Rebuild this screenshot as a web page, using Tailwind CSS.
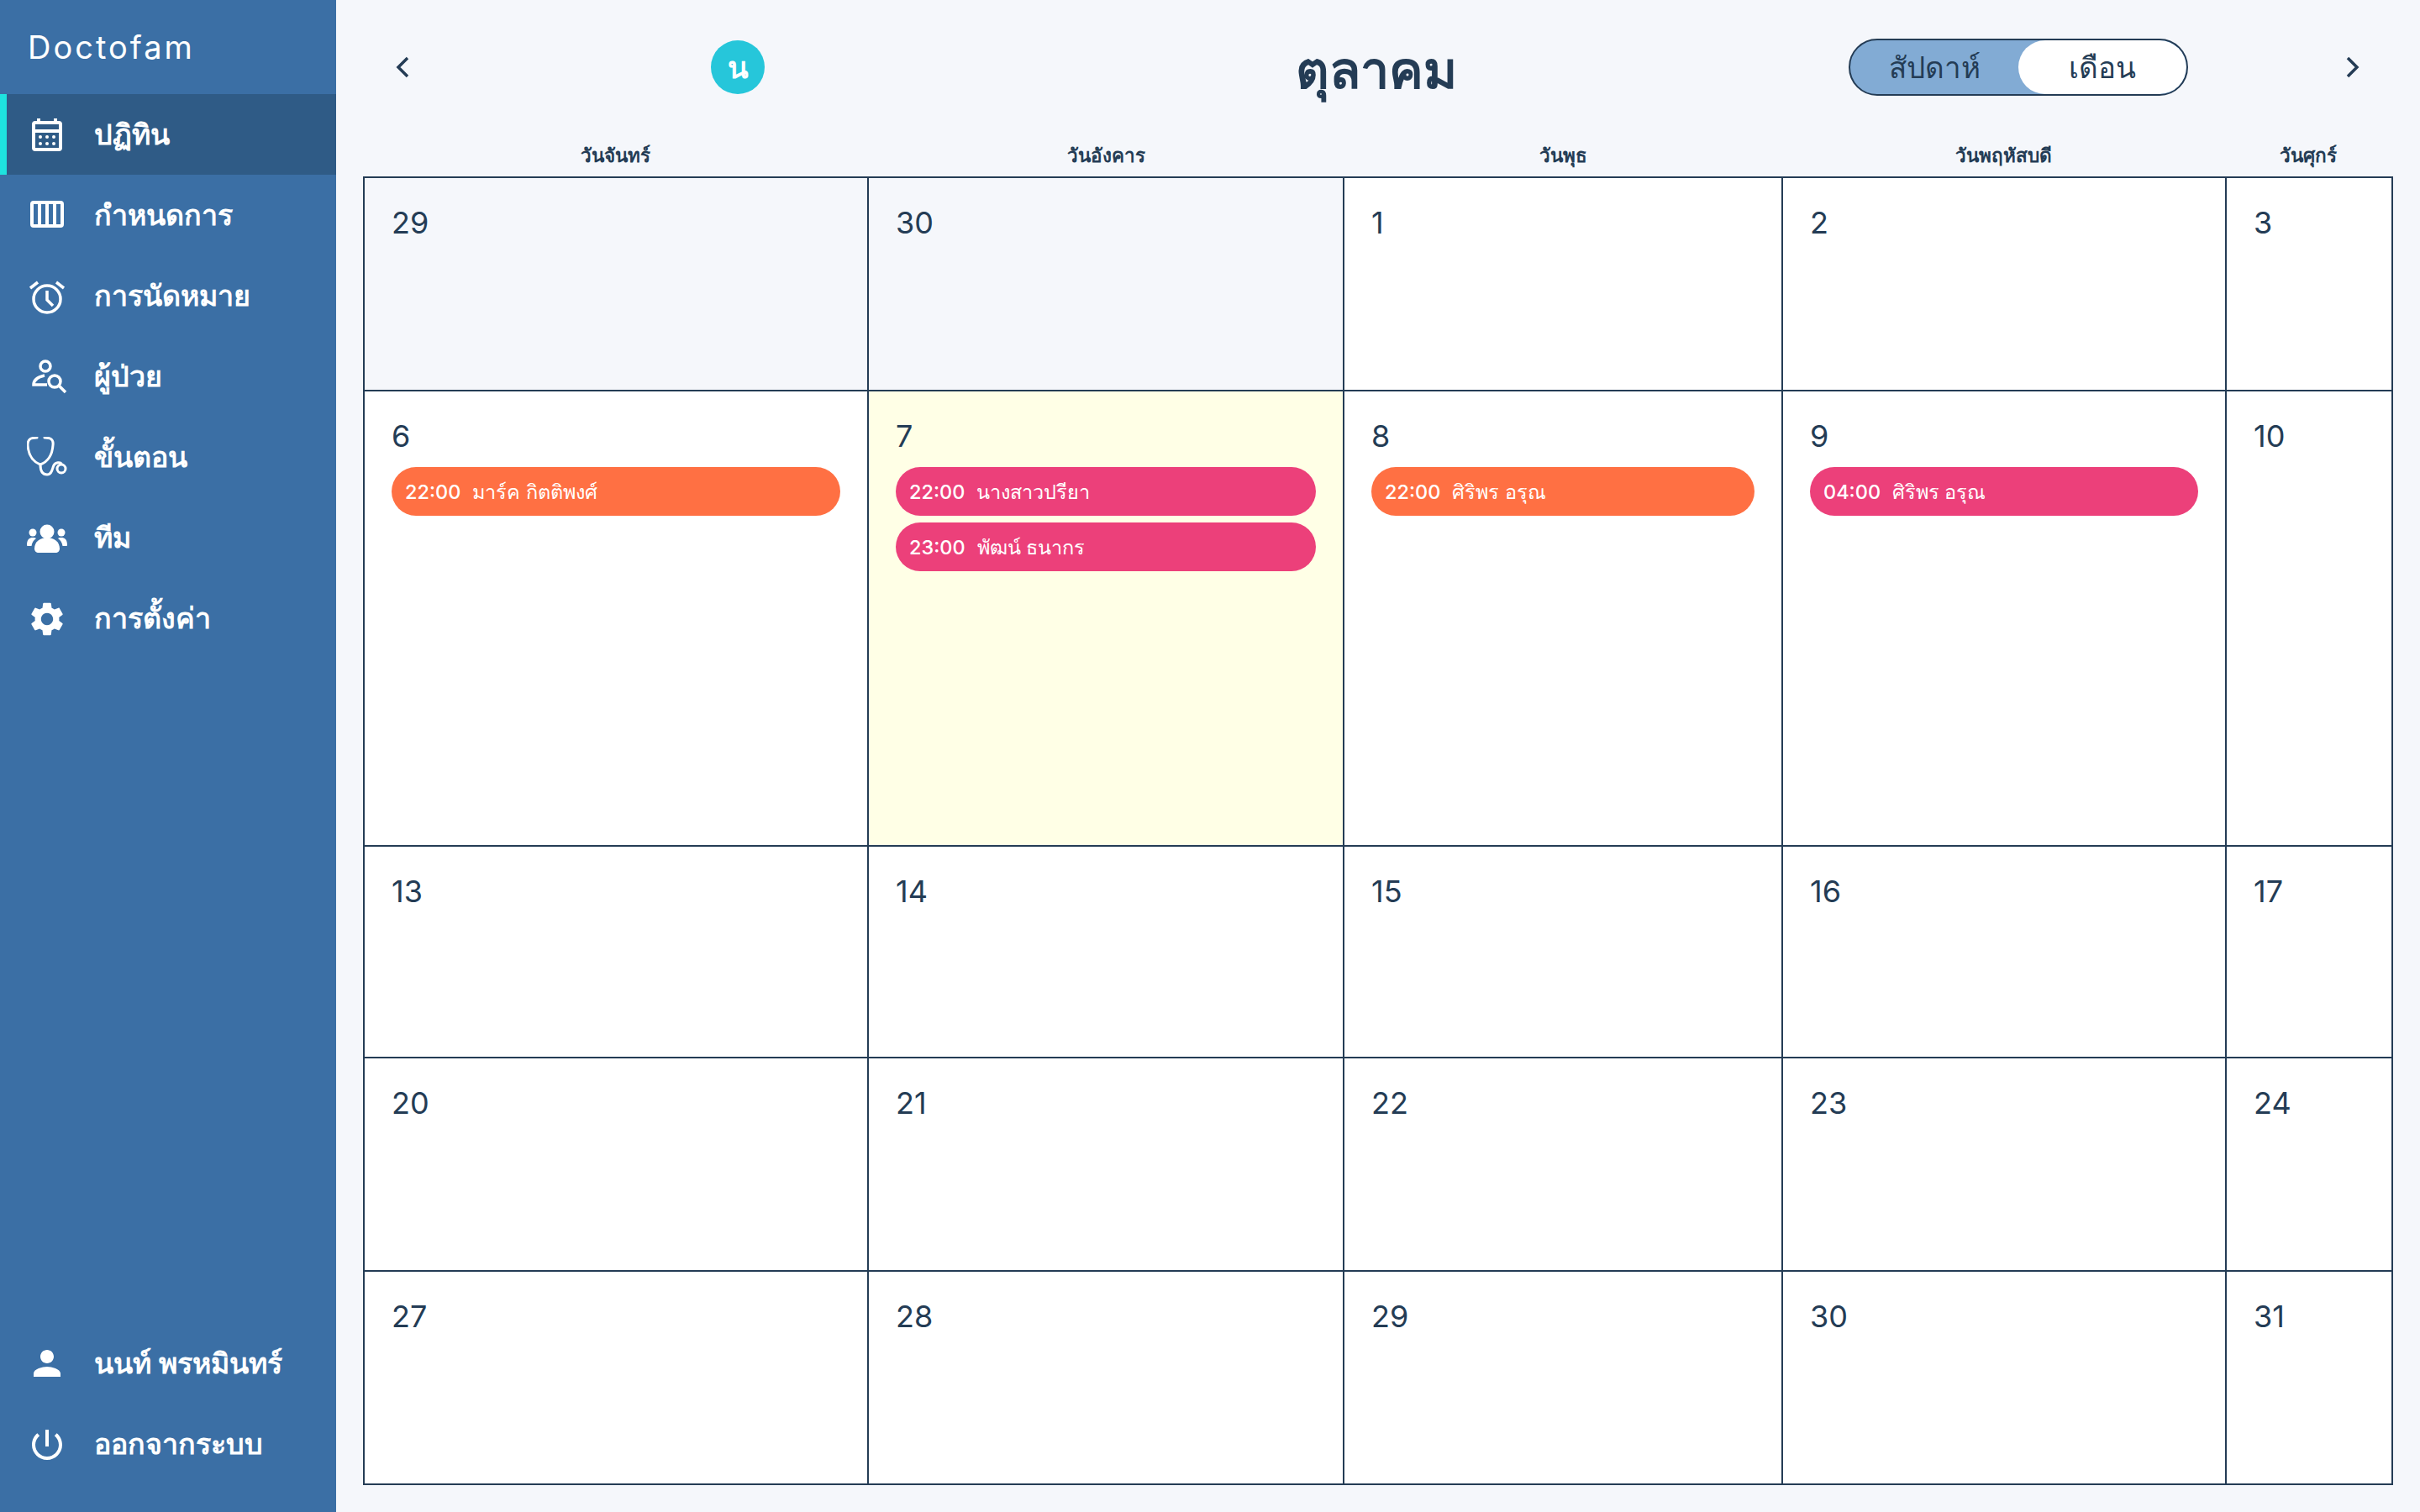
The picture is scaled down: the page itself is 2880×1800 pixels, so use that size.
<!doctype html>
<html lang="th">
<head>
<meta charset="utf-8">
<script src="https://cdn.jsdelivr.net/npm/@tailwindcss/browser@4"></script>
</head>
<body class="m-0">
<div class="flex h-[1800px] w-[2880px] overflow-hidden bg-[#f5f7fb] font-['Inter','Noto_Sans','DejaVu_Sans',sans-serif] text-[#243c55]">
  <aside class="flex w-[400px] shrink-0 flex-col bg-[#3b6fa5] pb-[33px] text-white">
    <div class="flex h-[112px] items-center pl-[33px] text-[38px] font-normal tracking-[3px]">Doctofam</div>
    <nav class="flex flex-1 flex-col">
      <a class="flex h-[96px] items-center gap-[32px] border-l-[8px] border-[#1ee3df] bg-[#2f5b86] pb-[2px] pl-[24px] text-[34px] font-semibold">
        <svg class="mt-[5px] h-[48px] w-[48px] shrink-0" viewBox="0 0 48 48" fill="none" stroke="#fff" stroke-width="4"><rect x="8" y="8" width="32" height="32" rx="2"/><path d="M8 18h32M14 3v7M34 3v7"/><g fill="#fff" stroke="none"><circle cx="16" cy="25" r="2"/><circle cx="24" cy="25" r="2"/><circle cx="32" cy="25" r="2"/><circle cx="16" cy="33" r="2"/><circle cx="24" cy="33" r="2"/><circle cx="32" cy="33" r="2"/></g></svg>
        <span>ปฏิทิน</span>
      </a>
      <a class="flex h-[96px] items-center gap-[32px] pb-[2px] pl-[32px] text-[34px] font-semibold">
        <svg class="h-[48px] w-[48px] shrink-0" viewBox="0 0 48 48" fill="none" stroke="#fff" stroke-width="4"><rect x="6" y="10" width="36" height="28" rx="2"/><path d="M15 10v28M24 10v28M33 10v28"/></svg>
        <span>กำหนดการ</span>
      </a>
      <a class="flex h-[96px] items-center gap-[32px] pb-[2px] pl-[32px] text-[34px] font-semibold">
        <svg class="mt-[5px] h-[48px] w-[48px] shrink-0" viewBox="0 0 48 48" fill="none" stroke="#fff" stroke-width="3.5"><circle cx="24" cy="26" r="16"/><path d="M24 16v11l7 7M4 13l9-7M44 13l-9-7"/></svg>
        <span>การนัดหมาย</span>
      </a>
      <a class="flex h-[96px] items-center gap-[32px] pb-[2px] pl-[32px] text-[34px] font-semibold">
        <svg class="mt-[6px] h-[48px] w-[48px] shrink-0" viewBox="0 0 48 48" fill="none" stroke="#fff" stroke-width="3.5"><circle cx="22" cy="10" r="6"/><path d="M21 21C12 23 8 27 8 32h16"/><circle cx="33" cy="28" r="7"/><path d="M38 33l8 8"/></svg>
        <span>ผู้ป่วย</span>
      </a>
      <a class="flex h-[96px] items-center gap-[32px] pb-[2px] pl-[32px] text-[34px] font-semibold">
        <svg class="mt-[1px] h-[48px] w-[48px] shrink-0" viewBox="0 0 48 48" fill="none" stroke="#fff" stroke-width="3" stroke-linecap="round"><path d="M12 1C4 1 1 3 1 10c1 14 7 20 15 23 8-3 14-9 15-23 1-7-3-9-10-9"/><path d="M16 33c0 8 3 12 8 12 6 0 6-7 8-11 2-4 8-4 9-2"/><circle cx="41" cy="38" r="5"/></svg>
        <span>ขั้นตอน</span>
      </a>
      <a class="flex h-[96px] items-center gap-[32px] pb-[2px] pl-[32px] text-[34px] font-semibold">
        <svg class="mt-[3px] h-[48px] w-[48px] shrink-0" viewBox="0 0 48 48" fill="#fff"><circle cx="24" cy="16" r="8.5"/><circle cx="7" cy="17" r="4.5"/><circle cx="41" cy="17" r="4.5"/><path d="M9 36c0-8 7-13 15-13s15 5 15 13c0 3-2 5-5 5H14c-3 0-5-2-5-5z"/><path d="M0 32c0-7 3-9 7-9 2 0 3 0 4 1-3 2-5 5-5.500 9H2c-1 0-2 0-2-1zM48 32c0-7-3-9-7-9-2 0-3 0-4 1 3 2 5 5 5.500 9H46c1 0 2 0 2-1z"/></svg>
        <span>ทีม</span>
      </a>
      <a class="flex h-[96px] items-center gap-[32px] pb-[2px] pl-[32px] text-[34px] font-semibold">
        <svg class="mt-[4px] h-[48px] w-[48px] shrink-0" viewBox="0 0 24 24" fill="#fff"><path d="M19.14 12.94c.04-.3.06-.61.06-.94 0-.32-.02-.64-.07-.94l2.03-1.58c.18-.14.23-.41.12-.61l-1.92-3.32c-.12-.22-.37-.29-.59-.22l-2.39.96c-.5-.38-1.03-.7-1.62-.94l-.36-2.54c-.04-.24-.24-.41-.48-.41h-3.84c-.24 0-.43.17-.47.41l-.36 2.54c-.59.24-1.13.57-1.62.94l-2.39-.96c-.22-.08-.47 0-.59.22L2.74 8.87c-.12.21-.08.47.12.61l2.03 1.58c-.05.3-.09.63-.09.94s.02.64.07.94l-2.03 1.58c-.18.14-.23.41-.12.61l1.92 3.32c.12.22.37.29.59.22l2.39-.96c.5.38 1.03.7 1.62.94l.36 2.54c.05.24.24.41.48.41h3.84c.24 0 .44-.17.47-.41l.36-2.54c.59-.24 1.13-.56 1.62-.94l2.39.96c.22.08.47 0 .59-.22l1.92-3.32c.12-.22.07-.47-.12-.61l-2.01-1.58zM12 15.6c-1.98 0-3.6-1.62-3.6-3.6s1.62-3.6 3.6-3.6 3.6 1.62 3.6 3.6-1.62 3.6-3.6 3.6z"/></svg>
        <span>การตั้งค่า</span>
      </a>
    </nav>
    <a class="flex h-[96px] items-center gap-[32px] pb-[2px] pl-[32px] text-[34px] font-semibold">
      <svg class="mt-[2px] h-[48px] w-[48px] shrink-0" viewBox="0 0 24 24" fill="#fff"><path d="M12 12c2.21 0 4-1.79 4-4s-1.79-4-4-4-4 1.790-4 4 1.790 4 4 4zm0 2c-2.670 0-8 1.340-8 4v2h16v-2c0-2.660-5.330-4-8-4z"/></svg>
      <span>นนท์ พรหมินทร์</span>
    </a>
    <a class="flex h-[96px] items-center gap-[32px] pb-[2px] pl-[32px] text-[34px] font-semibold">
      <svg class="mt-[4px] h-[48px] w-[48px] shrink-0" viewBox="0 0 24 24" fill="#fff"><path d="M13 3h-2v10h2V3zm4.830 2.170l-1.420 1.420C17.990 7.860 19 9.810 19 12c0 3.870-3.130 7-7 7s-7-3.130-7-7c0-2.190 1.010-4.140 2.580-5.420L6.170 5.170C4.230 6.820 3 9.260 3 12c0 4.970 4.030 9 9 9s9-4.030 9-9c0-2.740-1.230-5.180-3.170-6.830z"/></svg>
      <span>ออกจากระบบ</span>
    </a>
  </aside>

  <main class="flex flex-1 flex-col pl-[32px]">
    <header class="relative flex h-[160px] items-center">
      <svg class="ml-[38px] h-[28px] w-[18px]" viewBox="0 0 18 28" fill="none" stroke="#243c55" stroke-width="3.500"><path d="M15 3L4 14l11 11"/></svg>
      <div class="ml-[358px] flex h-[64px] w-[64px] items-center justify-center rounded-full bg-[#26c6da] text-[36px] font-semibold text-white">น</div>
      <h1 class="ml-[632px] mt-[6px] w-[196px] whitespace-nowrap text-[61px] font-semibold leading-none">ตุลาคม</h1>
      <div class="ml-[462px] flex h-[68px] w-[404px] overflow-hidden rounded-full border-2 border-[#243c55] bg-[#82abd4] text-[35px] font-medium">
        <span class="flex w-[200px] items-center justify-center">สัปดาห์</span>
        <span class="flex flex-1 items-center justify-center rounded-full bg-white">เดือน</span>
      </div>
      <svg class="ml-[187px] h-[28px] w-[18px]" viewBox="0 0 18 28" fill="none" stroke="#243c55" stroke-width="3.500"><path d="M3 3l11 11L3 25"/></svg>
    </header>
    <div class="grid h-[50px] w-[2414px] grid-cols-[601px_566px_522px_527px_198px] text-center text-[22.500px] font-semibold">
      <div class="pt-[8px]">วันจันทร์</div>
      <div class="pt-[8px]">วันอังคาร</div>
      <div class="pt-[8px]">วันพุธ</div>
      <div class="pt-[8px]">วันพฤหัสบดี</div>
      <div class="pt-[8px]">วันศุกร์</div>
    </div>
    <div class="grid w-[2416px] grid-cols-[600px_566px_522px_528px_198px] grid-rows-[254px_542px_252px_254px_254px] border-t-2 border-l-2 border-[#243c55] bg-white text-[36px] leading-[44px] [&>div]:border-r-2 [&>div]:border-b-2 [&>div]:border-[#243c55] [&>div]:px-[32px] [&>div]:pt-[31px]">
      <div class="bg-[#f5f7fb]">29</div>
      <div class="bg-[#f5f7fb]">30</div>
      <div>1</div>
      <div>2</div>
      <div>3</div>

      <div>
        <p>6</p>
        <p class="mt-[15px] flex h-[58px] items-center gap-[14px] rounded-full bg-[#ff7043] pl-[16px] pt-[2px] text-[23.500px] font-medium text-white"><span>22:00</span><span>มาร์ค กิตติพงศ์</span></p>
      </div>
      <div class="bg-[#ffffe6]">
        <p>7</p>
        <p class="mt-[15px] flex h-[58px] items-center gap-[14px] rounded-full bg-[#ec407a] pl-[16px] pt-[2px] text-[23.500px] font-medium text-white"><span>22:00</span><span>นางสาวปรียา</span></p>
        <p class="mt-[8px] flex h-[58px] items-center gap-[14px] rounded-full bg-[#ec407a] pl-[16px] pt-[2px] text-[23.500px] font-medium text-white"><span>23:00</span><span>พัฒน์ ธนากร</span></p>
      </div>
      <div>
        <p>8</p>
        <p class="mt-[15px] flex h-[58px] items-center gap-[14px] rounded-full bg-[#ff7043] pl-[16px] pt-[2px] text-[23.500px] font-medium text-white"><span>22:00</span><span>ศิริพร อรุณ</span></p>
      </div>
      <div>
        <p>9</p>
        <p class="mt-[15px] flex h-[58px] items-center gap-[14px] rounded-full bg-[#ec407a] pl-[16px] pt-[2px] text-[23.500px] font-medium text-white"><span>04:00</span><span>ศิริพร อรุณ</span></p>
      </div>
      <div>10</div>

      <div>13</div><div>14</div><div>15</div><div>16</div><div>17</div>
      <div>20</div><div>21</div><div>22</div><div>23</div><div>24</div>
      <div>27</div><div>28</div><div>29</div><div>30</div><div>31</div>
    </div>
  </main>
</div>
</body>
</html>
